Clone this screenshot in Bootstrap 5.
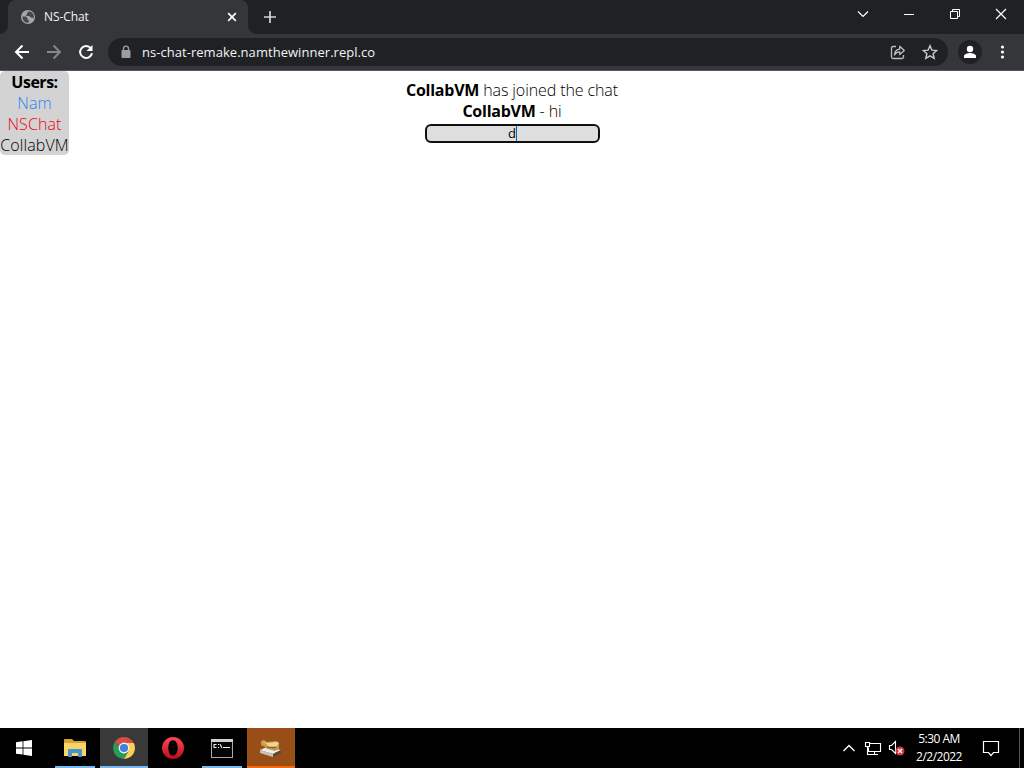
<!DOCTYPE html>
<html lang="en">
<head>
    <meta charset="utf-8">
    <title>NS-Chat</title>
    <link href="https://cdn.jsdelivr.net/npm/bootstrap@5.3.3/dist/css/bootstrap.min.css" rel="stylesheet">
    <style>
        body { font-family: "Open Sans", "Noto Sans", sans-serif; background: #fff; font-size: 12px; }
        svg { display: block; flex: none; }
        .desktop { width: 1024px; height: 768px; }

        /* browser */
        .tab-strip { height: 34px; background: #202124; padding-left: 8px; }
        .browser-tab { position: relative; width: 240px; background: #35363a; color: #f1f3f4; border-radius: 8px 8px 0 0; padding: 0 9px 0 12px; }
        .browser-tab::before, .browser-tab::after { content: ""; position: absolute; bottom: 0; width: 8px; height: 8px; }
        .browser-tab::before { left: -8px; background: radial-gradient(circle at 0 0, #202124 7.5px, #35363a 8px); }
        .browser-tab::after { right: -8px; background: radial-gradient(circle at 100% 0, #202124 7.5px, #35363a 8px); }
        .tab-title { letter-spacing: -.1px; margin-left: 8px; }
        .new-tab { margin-left: 14px; }
        .win-btn { width: 46px; height: 28px; }
        .toolbar { height: 37px; background: #35363a; border-bottom: 1px solid #55565a; padding: 0 12px 0 14px; }
        .address { width: 840px; height: 28px; background: #202124; color: #f1f3f4; border-radius: 14px; margin-left: 14px; padding: 0 10px 0 12px; }
        .url { font-size: 13px; letter-spacing: .04px; margin-left: 10px; padding-top: 1px; }
        .avatar { width: 24px; height: 24px; background: #202124; margin-left: 10px; }

        /* chat page */
        .chat-page { font-size: 16px; line-height: 21px; color: #000; font-weight: 350; letter-spacing: -.1px; }
        .users { width: 69px; height: 84px; background: #d3d3d3; border-radius: 5px; padding-top: 1px; }
        .user-name { letter-spacing: .1px; white-space: nowrap; }
        .chat-log { left: 0; right: 0; top: 9px; }
        .chat-page b { font-weight: 700; letter-spacing: -.25px; }
        .users b { letter-spacing: -.5px; }
        .message-box { width: 175px; height: 19px; border: 2px solid #101010; border-radius: 6px; background: #dedede; font-size: 13px; font-weight: 400; line-height: 15px; margin-top: 2px; padding-left: 1px; }
        .caret { width: 1px; height: 15px; background: #0067b0; }

        /* taskbar */
        .taskbar { height: 40px; background: #000; color: #fff; }
        .task { width: 48px; height: 40px; margin-right: 1px; }
        .task-open { box-shadow: inset 0 -2px #76b9ed; }
        .task-narrow { width: 40px; margin: 0 5px 0 4px; }
        .task-files { margin-left: 6px; }
        .task-active { background: #393939; }
        .task-alert { background: #984e16; box-shadow: inset 0 -2px #f26a0b; }
        .clock { width: 62px; line-height: 18px; letter-spacing: -.5px; margin-left: 3px; }
        .notice { margin: 0 19px 0 12px; }
        .show-desktop { width: 5px; height: 40px; border-left: 1px solid #555; }
    </style>
</head>
<body>
<div class="desktop d-flex flex-column overflow-hidden">

    <!-- Tabs -->
    <div class="tab-strip d-flex">
        <div class="browser-tab d-flex align-items-center">
            <svg width="16" height="16" viewBox="0 0 16 16"><circle cx="8" cy="8" r="7" fill="#a4a7aa"/><path d="M2.500 7.500H6l1.500 1.500v1.500L9 11.500l-.5 2.300C4.500 14 2.300 11 2.500 7.500zM9 2.200 7 4v1.500L5.500 7h4l1 1.500h1.500l1.500 1C14.500 6 13 3 9 2.200z" fill="#45474b"/></svg>
            <span class="tab-title">NS-Chat</span>
            <svg class="ms-auto" width="14" height="14" viewBox="0 0 14 14"><path d="m3.200 3.200 7.600 7.600m0-7.600-7.600 7.600" stroke="#fff" stroke-width="1.700"/></svg>
        </div>
        <svg class="new-tab align-self-center" width="16" height="16" viewBox="0 0 16 16"><path d="M8 2v12M2 8h12" stroke="#d4d5d7" stroke-width="1.700"/></svg>
        <div class="d-flex ms-auto">
            <div class="win-btn d-flex align-items-center justify-content-center"><svg width="12" height="12" viewBox="0 0 12 12" fill="none" stroke="#fff" stroke-width="1.200"><path d="m1 3.500 5 5 5-5"/></svg></div>
            <div class="win-btn d-flex align-items-center justify-content-center"><svg width="12" height="12" viewBox="0 0 12 12"><path d="M1 6.500h10" stroke="#fff"/></svg></div>
            <div class="win-btn d-flex align-items-center justify-content-center"><svg width="12" height="12" viewBox="0 0 12 12" fill="none" stroke="#fff"><path d="M1.500 3.500h7v7h-7zM3.500 3.500v-2h7v7h-2"/></svg></div>
            <div class="win-btn d-flex align-items-center justify-content-center"><svg width="12" height="12" viewBox="0 0 12 12"><path d="m1 1 10 10m0-10L1 11" stroke="#fff" stroke-width="1.200"/></svg></div>
        </div>
    </div>

    <!-- Toolbar -->
    <div class="toolbar d-flex align-items-center">
        <svg width="16" height="16" viewBox="0 0 16 16" fill="none" stroke="#fff" stroke-width="2"><path d="M15 8H2.500M8.500 1.500 2 8l6.500 6.500"/></svg>
        <svg class="ms-3" width="16" height="16" viewBox="0 0 16 16" fill="none" stroke="#85878a" stroke-width="1.900"><path d="M1 8h12.500M7.500 1.500 14 8l-6.500 6.500"/></svg>
        <svg class="ms-3" width="16" height="16" viewBox="0 0 16 16" fill="none"><path d="M12.800 4.200A6 6 0 1 0 14 9.200" stroke="#fff" stroke-width="2"/><path d="M14.500 1v6h-6z" fill="#fff"/></svg>
        <div class="address d-flex align-items-center">
            <svg width="12" height="14" viewBox="0 0 12 14"><rect x="1.500" y="5" width="9" height="8" rx="1" fill="#9a9da1"/><path d="M3.500 6V3.700a2.500 2.500 0 0 1 5 0V6" fill="none" stroke="#9a9da1" stroke-width="1.300"/></svg>
            <span class="url">ns-chat-remake.namthewinner.repl.co</span>
            <svg class="ms-auto" width="16" height="16" viewBox="0 0 16 16" fill="none" stroke="#bcbec1" stroke-width="1.300"><path d="M6 2.500H3Q1.500 2.500 1.500 4v9Q1.500 14.500 3 14.500h9q1.500 0 1.500-1.500v-2"/><path d="M4.500 11C4.800 7.500 6.500 5.500 9.700 5.200V2.300L14.300 6.500 9.700 10.500V7.900C7.500 7.900 5.700 8.800 4.500 11z" stroke-linejoin="round"/></svg>
            <svg class="ms-3" width="16" height="16" viewBox="0 0 16 16"><path d="m8 1.700 1.900 4.400 4.800.4-3.600 3.200 1.100 4.700L8 11.900l-4.200 2.500 1.100-4.700-3.600-3.200 4.800-.4z" fill="none" stroke="#c8cacc" stroke-width="1.400"/></svg>
        </div>
        <div class="avatar rounded-circle d-flex align-items-center justify-content-center"><svg width="14" height="14" viewBox="0 0 14 14" fill="#fff"><circle cx="7" cy="4" r="3.200"/><path d="M1 13v-2c0-2 4-3 6-3s6 1 6 3v2z"/></svg></div>
        <svg class="ms-auto" width="16" height="16" viewBox="0 0 16 16" fill="#fff"><circle cx="6.500" cy="3" r="1.600"/><circle cx="6.500" cy="8" r="1.600"/><circle cx="6.500" cy="13" r="1.600"/></svg>
    </div>

    <!-- Chat -->
    <div class="chat-page flex-grow-1 position-relative text-center">
        <div class="users">
            <div class="user-name"><b>Users:</b></div>
            <div class="user-name" style="color: #1e83f7">Nam</div>
            <div class="user-name" style="color: #f00018">NSChat</div>
            <div class="user-name">CollabVM</div>
        </div>
        <div class="chat-log position-absolute d-flex flex-column align-items-center">
            <div><b>CollabVM</b> has joined the chat</div>
            <div><b>CollabVM</b> - hi</div>
            <div class="message-box d-flex justify-content-center"><span>d</span><span class="caret"></span></div>
        </div>
    </div>

    <!-- Taskbar -->
    <div class="taskbar d-flex align-items-center">
        <div class="task d-flex align-items-center justify-content-center">
            <svg width="16" height="16" viewBox="0 0 16 16" fill="#fff"><path d="M0 2.300 6.600 1.300v6.200H0zM7.400 1.200 16 0v7.500H7.400zM0 8.400h6.600v6.200L0 13.700zM7.400 8.400H16V16l-8.600-1.200z"/></svg>
        </div>
        <div class="task task-narrow task-files task-open d-flex align-items-center justify-content-center">
            <svg width="22" height="20" viewBox="0 0 22 20"><path d="M0 2q0-1 1-1h7l2 2h11q1 0 1 1v5H0z" fill="#d6a32e"/><path d="M0 5h22v13H0z" fill="#f8d568"/><path d="M4 19v-7q0-1 1-1h12q1 0 1 1v7h-4v-4H8v4z" fill="#4893ce"/></svg>
        </div>
        <div class="task task-open task-active d-flex align-items-center justify-content-center">
            <svg width="22" height="22" viewBox="0 0 22 22"><path d="M11 11 1.500 5.500A11 11 0 0 1 20.500 5.500z" fill="#d94c40"/><path d="M11 11 1.500 5.500A11 11 0 0 0 11 22l4-8z" fill="#279b58"/><path d="M11 6h9.800A11 11 0 0 1 11 22l4.500-8z" fill="#f8cf58"/><circle cx="11" cy="11" r="5.400" fill="#f3f3f3"/><circle cx="11" cy="11" r="4.100" fill="#437fdd"/></svg>
        </div>
        <div class="task d-flex align-items-center justify-content-center">
            <svg width="22" height="22" viewBox="0 0 22 22"><defs><linearGradient id="red" x2="0" y2="1"><stop stop-color="#ff4a55"/><stop offset="1" stop-color="#b80d20"/></linearGradient></defs><path fill="url(#red)" fill-rule="evenodd" d="M11 0a11 11 0 1 0 0 22 11 11 0 0 0 0-22zm0 3.300c3 0 4.700 3.500 4.700 7.700S14 18.700 11 18.700 6.300 15.200 6.300 11 8 3.300 11 3.300z"/></svg>
        </div>
        <div class="task task-narrow task-open d-flex align-items-center justify-content-center">
            <svg width="22" height="19" viewBox="0 0 22 19"><rect x=".5" y=".5" width="21" height="18" fill="#050505" stroke="#aaa"/><path d="M0 0h22v3H0z" fill="#d0d0d0"/><path d="M5.500 5.500H3v3h2.500M7 5.500h1M7 8.500h1M9 5l2 4M12 8.500h7" fill="none" stroke="#eee" stroke-width="1.100"/></svg>
        </div>
        <div class="task task-alert d-flex align-items-center justify-content-center">
            <svg width="24" height="20" viewBox="0 0 24 20"><path d="m1 12 7-3 14 3-8 4z" fill="#eee"/><path d="m1 12 13 4v3L1 15z" fill="#c6c4bf"/><path d="m14 16 8-4v3l-8 4z" fill="#55483c"/><path d="m2 3 3-1 3 2 10-1 2 2v6l-4 2-8-2-2-2-4-2z" fill="#c69b51"/><path d="m3 3 4 2 10-1 3 1-2 3-8 1-3-3z" fill="#efd48f"/><path d="m8 9 9 1" stroke="#795329"/></svg>
        </div>
        <div class="d-flex align-items-center ms-auto">
            <svg width="14" height="14" viewBox="0 0 14 14"><path d="m1.500 10 5.500-5.500 5.500 5.500" fill="none" stroke="#fff" stroke-width="1.400"/></svg>
            <svg class="ms-2" width="18" height="16" viewBox="0 0 18 16" fill="none" stroke="#fff" stroke-width="1.100"><path d="M5.500 3.500h11v8h-12v-4M10.500 11.500v3M7 14.500h7M1.500 2.500h4v4h-4zM3.500 6.500v8H7"/></svg>
            <svg style="margin-left: 6px" width="17" height="16" viewBox="0 0 17 16"><path d="M1.500 5.500h2l4-4v12l-4-4h-2z" fill="none" stroke="#fff" stroke-width="1.100"/><circle cx="12" cy="11" r="4.500" fill="#d3363d"/><path d="m10 9 4 4m0-4-4 4" stroke="#fff" stroke-width="1.300"/></svg>
            <div class="clock text-center">5:30 AM<br>2/2/2022</div>
            <svg class="notice" width="18" height="18" viewBox="0 0 18 18"><path d="M1.500 2.500h15v11h-5L9 16.500l-2.500-3h-5z" fill="none" stroke="#fff" stroke-width="1.200"/></svg>
            <div class="show-desktop"></div>
        </div>
    </div>
</div>
<script src="https://cdn.jsdelivr.net/npm/bootstrap@5.3.3/dist/js/bootstrap.bundle.min.js"></script>
</body>
</html>
